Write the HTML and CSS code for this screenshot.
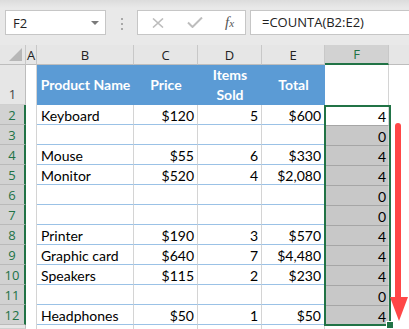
FILE: index.html
```html
<!DOCTYPE html>
<html lang="en">
<head>
    <meta charset="UTF-8">
    <title>COUNTA</title>
    <link rel="stylesheet" href="styles.css">
</head>
<body>
    <!-- Formula bar -->
    <div class="toolbar">
        <div class="name-box">
            <span>F2</span>
            <span class="drop"></span>
        </div>
        <svg class="grip" width="4" height="12" viewBox="0 0 4 12">
            <rect x="1" y="0" width="2" height="2" fill="#a8a8a8"/>
            <rect x="1" y="5" width="2" height="2" fill="#a8a8a8"/>
            <rect x="1" y="10" width="2" height="2" fill="#a8a8a8"/>
        </svg>
        <div class="btn-box">
            <svg width="14" height="10" viewBox="0 0 14 10"><path d="M2 0.5 L12 9.5 M12 0.5 L2 9.5" stroke="#bdbdbd" stroke-width="1.6" fill="none"/></svg>
            <svg width="16" height="11" viewBox="0 0 16 11"><path d="M1 5.5 L5.5 10 L15 0.5" stroke="#bdbdbd" stroke-width="2" fill="none"/></svg>
            <span class="fx">f<small>x</small></span>
        </div>
        <div class="formula">=COUNTA(B2:E2)</div>
    </div>

    <!-- Sheet -->
    <div class="sheet">
        <div class="row colhead">
            <div class="cell corner"><span class="tri"></span></div>
            <div class="cell">A</div>
            <div class="cell">B</div>
            <div class="cell">C</div>
            <div class="cell">D</div>
            <div class="cell">E</div>
            <div class="cell sel">F</div>
            <div class="cell last"></div>
        </div>

        <div class="row tall">
            <div class="cell rh bottom">1</div>
            <div class="cell a"></div>
            <div class="cell th">Product Name</div>
            <div class="cell th">Price</div>
            <div class="cell th">Items<br>Sold</div>
            <div class="cell th">Total</div>
            <div class="cell f plain"></div>
            <div class="cell g"></div>
        </div>

        <div class="row">
            <div class="cell rh on">2</div><div class="cell a"></div>
            <div class="cell td">Keyboard</div><div class="cell td num">$120</div><div class="cell td num">5</div><div class="cell td num">$600</div>
            <div class="cell f num">4</div><div class="cell g"></div>
        </div>
        <div class="row">
            <div class="cell rh on">3</div><div class="cell a"></div>
            <div class="cell td"></div><div class="cell td"></div><div class="cell td"></div><div class="cell td"></div>
            <div class="cell f shade num">0</div><div class="cell g"></div>
        </div>
        <div class="row">
            <div class="cell rh on">4</div><div class="cell a"></div>
            <div class="cell td">Mouse</div><div class="cell td num">$55</div><div class="cell td num">6</div><div class="cell td num">$330</div>
            <div class="cell f shade num">4</div><div class="cell g"></div>
        </div>
        <div class="row">
            <div class="cell rh on">5</div><div class="cell a"></div>
            <div class="cell td">Monitor</div><div class="cell td num">$520</div><div class="cell td num">4</div><div class="cell td num">$2,080</div>
            <div class="cell f shade num">4</div><div class="cell g"></div>
        </div>
        <div class="row">
            <div class="cell rh on">6</div><div class="cell a"></div>
            <div class="cell td"></div><div class="cell td"></div><div class="cell td"></div><div class="cell td"></div>
            <div class="cell f shade num">0</div><div class="cell g"></div>
        </div>
        <div class="row">
            <div class="cell rh on">7</div><div class="cell a"></div>
            <div class="cell td"></div><div class="cell td"></div><div class="cell td"></div><div class="cell td"></div>
            <div class="cell f shade num">0</div><div class="cell g"></div>
        </div>
        <div class="row">
            <div class="cell rh on">8</div><div class="cell a"></div>
            <div class="cell td">Printer</div><div class="cell td num">$190</div><div class="cell td num">3</div><div class="cell td num">$570</div>
            <div class="cell f shade num">4</div><div class="cell g"></div>
        </div>
        <div class="row">
            <div class="cell rh on">9</div><div class="cell a"></div>
            <div class="cell td">Graphic card</div><div class="cell td num">$640</div><div class="cell td num">7</div><div class="cell td num">$4,480</div>
            <div class="cell f shade num">4</div><div class="cell g"></div>
        </div>
        <div class="row">
            <div class="cell rh on">10</div><div class="cell a"></div>
            <div class="cell td">Speakers</div><div class="cell td num">$115</div><div class="cell td num">2</div><div class="cell td num">$230</div>
            <div class="cell f shade num">4</div><div class="cell g"></div>
        </div>
        <div class="row">
            <div class="cell rh on">11</div><div class="cell a"></div>
            <div class="cell td"></div><div class="cell td"></div><div class="cell td"></div><div class="cell td"></div>
            <div class="cell f shade num">0</div><div class="cell g"></div>
        </div>
        <div class="row">
            <div class="cell rh on">12</div><div class="cell a"></div>
            <div class="cell td">Headphones</div><div class="cell td num">$50</div><div class="cell td num">1</div><div class="cell td num">$50</div>
            <div class="cell f shade num">4</div><div class="cell g"></div>
        </div>
        <div class="row stub">
            <div class="cell rh"></div><div class="cell a"></div>
            <div class="cell"></div><div class="cell"></div><div class="cell"></div><div class="cell"></div>
            <div class="cell"></div><div class="cell g"></div>
        </div>

        <!-- selection F2:F12 -->
        <div class="selection"></div>
        <div class="handle"></div>

        <!-- red arrow -->
        <svg class="arrow" width="19" height="200" viewBox="0 0 19 200">
            <rect x="5" y="0" width="6" height="180" rx="3" fill="#ff4747"/>
            <polygon points="0,174 18,174 9,198" fill="#ff4747"/>
        </svg>
    </div>
</body>
</html>
```

FILE: styles.css
```css
body {
    margin: 0;
    width: 409px;
    height: 329px;
    overflow: hidden;
    background: #fff;
    font-family: "Open Sans", "Noto Sans", sans-serif;
}

/* Formula bar */
.toolbar {
    height: 45px;
    box-sizing: border-box;
    padding-top: 10px;
    display: flex;
    align-items: flex-start;
    background: linear-gradient(#dcdcdc, #e9e9e9 8px, #e9e9e9);
}

.name-box {
    margin-left: 5px;
    width: 101px;
    height: 25px;
    box-sizing: border-box;
    border: 1px solid #c6c6c6;
    background: #fff;
    display: flex;
    align-items: center;
    justify-content: space-between;
    padding: 0 6px 0 7px;
    font-size: 13px;
    color: #222;
}

.drop {
    width: 0;
    height: 0;
    border-left: 4px solid transparent;
    border-right: 4px solid transparent;
    border-top: 4px solid #7a7a7a;
}

.grip {
    margin: 8px 13px 0 14px;
}

.btn-box {
    width: 109px;
    height: 25px;
    box-sizing: border-box;
    border: 1px solid #c6c6c6;
    background: #fff;
    display: flex;
    align-items: center;
    padding-left: 13px;
    gap: 22px;
}

.fx {
    font-family: "Liberation Serif", serif;
    font-style: italic;
    font-size: 15px;
    color: #555;
    margin-left: 0;
}

.fx small {
    font-size: 11px;
}

.formula {
    margin-left: 4px;
    flex: 1;
    height: 25px;
    box-sizing: border-box;
    border: 1px solid #c6c6c6;
    border-right: none;
    background: #fff;
    padding-left: 11px;
    font-size: 13px;
    line-height: 23px;
    color: #222;
}

/* Sheet */
.sheet {
    position: relative;
}

.row {
    display: grid;
    grid-template-columns: 26px 11px 97px 64px 64px 63px 64px 20px;
    height: 20px;
}

.row.tall {
    height: 40px;
}

.row.stub {
    height: 4px;
}

.cell {
    box-sizing: border-box;
    border-right: 1px solid #d4d4d4;
    display: flex;
    align-items: center;
    padding: 0 4px;
    font-family: Lato, sans-serif;
    font-size: 14px;
    color: #000;
    white-space: nowrap;
    overflow: hidden;
}

.colhead .cell {
    background: #e6e6e6;
    border-right: 1px solid #c8c8c8;
    border-bottom: 1px solid #bdbdbd;
    justify-content: center;
    padding: 0;
    font-family: "Open Sans", sans-serif;
    font-size: 13px;
    color: #222;
}

.colhead .cell.sel {
    background: #d2d2d2;
    color: #217346;
    border-bottom: 2px solid #217346;
}

.colhead .cell.last {
    border-right: none;
}

.corner {
    position: relative;
}

.tri {
    position: absolute;
    right: 3px;
    bottom: 3px;
    width: 13px;
    height: 13px;
    background: #b7b7b7;
    clip-path: polygon(100% 0, 100% 100%, 0 100%);
}

.rh {
    background: #e6e6e6;
    border-right: 1px solid #bdbdbd;
    border-bottom: 1px solid #d0d0d0;
    justify-content: center;
    padding: 0;
    font-family: "Open Sans", sans-serif;
    font-size: 13px;
    color: #444;
}

.rh.bottom {
    align-items: flex-end;
    padding-bottom: 1px;
}

.rh.on {
    background: #d2d2d2;
    color: #217346;
    border-right: 2px solid #217346;
    border-bottom: 1px solid #bababa;
}

.th {
    background: #5b9bd5;
    border-right: none;
    justify-content: center;
    text-align: center;
    line-height: 20px;
    color: #fff;
    font-weight: bold;
    padding: 0;
}

.td {
    border-bottom: 1px solid #9bc2e6;
    padding-top: 2px;
}

.num {
    justify-content: flex-end;
    padding-right: 3px;
}

.f {
    border-right: 1px solid #d4d4d4;
    padding-right: 2px;
    padding-top: 2px;
}

.shade {
    background: #c8c8c8;
    border-top: 1px solid #a6a6a6;
}

.g {
    border-right: none;
}

.selection {
    position: absolute;
    left: 324px;
    top: 60px;
    width: 67px;
    height: 221px;
    box-sizing: border-box;
    border: 2px solid #217346;
}

.handle {
    position: absolute;
    left: 386px;
    top: 276px;
    width: 6px;
    height: 6px;
    background: #217346;
    border: 1px solid #fff;
}

.arrow {
    position: absolute;
    left: 390px;
    top: 78px;
}
```
